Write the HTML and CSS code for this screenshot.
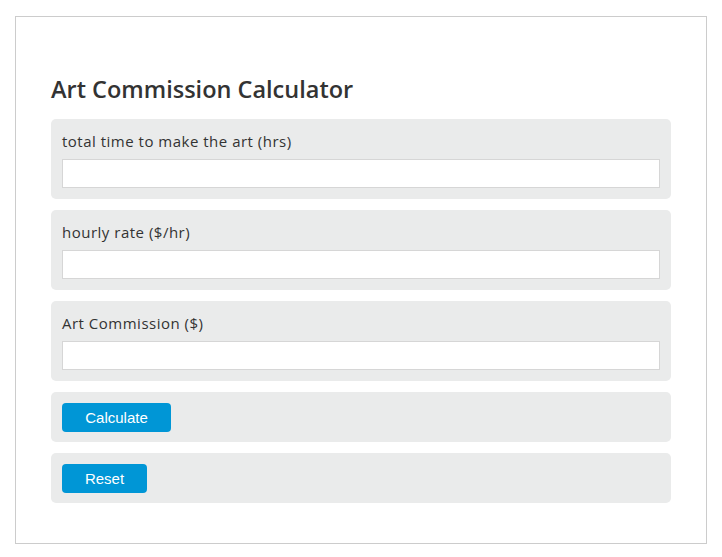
FILE: index.html
```html
<!DOCTYPE html>
<html>
<head>
<meta charset="utf-8">
<link rel="stylesheet" href="styles.css">
</head>
<body>
<div class="calc">
  <h2 class="title">Art Commission Calculator</h2>
  <div class="row">
    <label class="label">total time to make the art (hrs)</label>
    <input class="field" type="text">
  </div>
  <div class="row">
    <label class="label">hourly rate ($/hr)</label>
    <input class="field" type="text">
  </div>
  <div class="row">
    <label class="label">Art Commission ($)</label>
    <input class="field" type="text">
  </div>
  <div class="row row-btn">
    <button class="btn btn-calc">Calculate</button>
  </div>
  <div class="row row-btn">
    <button class="btn btn-reset">Reset</button>
  </div>
</div>
</body>
</html>
```
FILE: styles.css
```css
html, body {
  margin: 0;
  padding: 0;
  background: #ffffff;
}
body {
  padding: 16px 15px 0 15px;
}
.calc {
  box-sizing: border-box;
  width: 692px;
  height: 528px;
  border: 1px solid #cccccc;
  padding: 57px 35px 0 35px;
  font-family: "Open Sans", sans-serif;
}
.title {
  margin: 0 0 15px 0;
  font-size: 23.5px;
  font-weight: 600;
  color: #333333;
  line-height: 30px;
}
.row {
  background: #eaebeb;
  border-radius: 5px;
  padding: 10px 11px 11px 11px;
  margin-bottom: 11px;
  display: flex;
  flex-direction: column;
  align-items: flex-start;
}
.label {
  font-size: 15px;
  color: #333333;
  line-height: 24px;
  margin-bottom: 6px;
  letter-spacing: 0.5px;
}
.field {
  box-sizing: border-box;
  width: 100%;
  height: 29px;
  border: 1px solid #d6d6d6;
  background: #ffffff;
  margin: 0;
  padding: 0 6px;
}
.row-btn {
  padding: 11px 11px 10px 11px;
}
.btn {
  height: 29px;
  border: none;
  border-radius: 4px;
  background: #0096d6;
  color: #ffffff;
  font-family: "Liberation Sans", Arial, sans-serif;
  font-size: 15px;
  padding: 0;
}
.btn-calc { width: 109px; }
.btn-reset { width: 85px; }
```
